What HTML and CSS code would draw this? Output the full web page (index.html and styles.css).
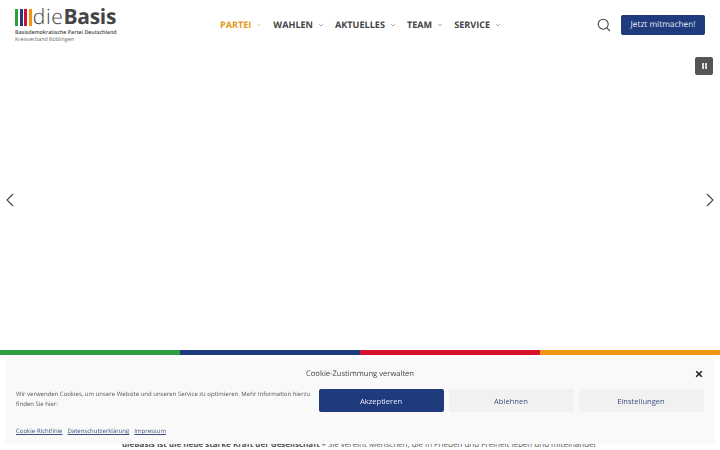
FILE: index.html
```html
<!DOCTYPE html>
<html lang="de">
<head>
  <meta charset="utf-8">
  <title>dieBasis Kreisverband Böblingen</title>
  <link rel="stylesheet" href="styles.css">
</head>
<body>
  <header class="site-header">
    <a class="logo" href="#">
      <span class="logo-top">
        <span class="logo-bars">
          <i class="bar bar-green"></i>
          <i class="bar bar-blue"></i>
          <i class="bar bar-red"></i>
          <i class="bar bar-orange"></i>
        </span>
        <span class="logo-name"><span class="logo-die">die</span><b>Basis</b></span>
      </span>
      <span class="logo-claim">Basisdemokratische Partei Deutschland</span>
      <span class="logo-sub">Kreisverband Böblingen</span>
    </a>
    <nav class="main-nav">
      <a class="nav-item active" href="#">PARTEI<svg class="caret" viewBox="0 0 8 6"><path d="M1.5 1.5 4 4l2.5-2.5"/></svg></a>
      <a class="nav-item" href="#">WAHLEN<svg class="caret" viewBox="0 0 8 6"><path d="M1.5 1.5 4 4l2.5-2.5"/></svg></a>
      <a class="nav-item" href="#">AKTUELLES<svg class="caret" viewBox="0 0 8 6"><path d="M1.5 1.5 4 4l2.5-2.5"/></svg></a>
      <a class="nav-item" href="#">TEAM<svg class="caret" viewBox="0 0 8 6"><path d="M1.5 1.5 4 4l2.5-2.5"/></svg></a>
      <a class="nav-item" href="#">SERVICE<svg class="caret" viewBox="0 0 8 6"><path d="M1.5 1.5 4 4l2.5-2.5"/></svg></a>
    </nav>
    <div class="header-tools">
      <svg class="search-icon" viewBox="0 0 14 14"><circle cx="6.2" cy="6.2" r="5"/><path d="M9.8 9.8 13 13"/></svg>
      <a class="cta" href="#">Jetzt mitmachen!</a>
    </div>
  </header>

  <section class="hero">
    <button class="pause"><i></i><i></i></button>
    <svg class="arrow arrow-prev" viewBox="0 0 10 14"><path d="M8 1 2 7l6 6"/></svg>
    <svg class="arrow arrow-next" viewBox="0 0 10 14"><path d="M2 1l6 6-6 6"/></svg>
  </section>

  <div class="stripe">
    <i class="bar-green"></i>
    <i class="bar-blue"></i>
    <i class="bar-red"></i>
    <i class="bar-orange"></i>
  </div>

  <section class="intro">
    <p><b>dieBasis ist die neue starke Kraft der Gesellschaft –</b> Sie vereint Menschen, die in Frieden und Freiheit leben und miteinander</p>
  </section>

  <div class="cookie-box">
    <div class="cookie-head">
      <span>Cookie-Zustimmung verwalten</span>
      <svg class="cookie-close" viewBox="0 0 10 10"><path d="M1.5 1.5l7 7M8.5 1.5l-7 7"/></svg>
    </div>
    <div class="cookie-main">
      <p>Wir verwenden Cookies, um unsere Website und unseren Service zu optimieren. Mehr Information hierzu finden Sie hier:</p>
      <div class="cookie-buttons">
        <button class="btn btn-primary">Akzeptieren</button>
        <button class="btn">Ablehnen</button>
        <button class="btn">Einstellungen</button>
      </div>
    </div>
    <div class="cookie-links">
      <a href="#">Cookie-Richtlinie</a>
      <a href="#">Datenschutzerklärung</a>
      <a href="#">Impressum</a>
    </div>
  </div>
</body>
</html>
```

FILE: styles.css
```css
* {
  box-sizing: border-box;
}
html, body {
  height: 450px;
  overflow: hidden;
}
body {
  margin: 0;
  background: #fff;
  color: #444;
  font-family: "Open Sans", sans-serif;
  text-rendering: geometricPrecision;
}
a {
  color: inherit;
  text-decoration: none;
}

.bar-green { background: #2f9e3f; }
.bar-blue { background: #1f3a7d; }
.bar-red { background: #d5132b; }
.bar-orange { background: #f0950f; }

.site-header {
  display: flex;
  align-items: flex-start;
  height: 50px;
  padding: 6px 15px 0;
}

.logo {
  display: flex;
  flex-direction: column;
  width: 190px;
  flex: none;
}
.logo-top {
  display: flex;
  align-items: center;
  gap: 1px;
  height: 22px;
}
.logo-bars {
  display: flex;
  gap: 1.6px;
  margin-top: 1px;
}
.bar {
  width: 3px;
  height: 17px;
}
.logo-name {
  font-size: 21px;
  line-height: 22px;
  color: #444;
}
.logo-die {
  font-weight: 300;
  letter-spacing: 0.6px;
}
.logo-name b {
  letter-spacing: -0.25px;
}
.logo-claim {
  font-size: 5.3px;
  line-height: 8px;
  font-weight: 600;
  color: #444;
}
.logo-sub {
  font-size: 5.3px;
  line-height: 7px;
  color: #666;
}

.main-nav {
  display: flex;
  gap: 11px;
  margin-top: 12px;
  margin-left: 15px;
}
.nav-item {
  display: flex;
  align-items: center;
  gap: 5px;
  font-size: 9.1px;
  line-height: 14px;
  font-weight: 700;
  color: #444;
}
.nav-item.active {
  color: #e29a1c;
}
.caret {
  width: 6px;
  height: 4.5px;
  fill: none;
  stroke: #888;
  stroke-width: 1;
}
.nav-item.active .caret {
  stroke: #eec07a;
}

.header-tools {
  display: flex;
  align-items: center;
  gap: 10px;
  margin-left: auto;
  margin-top: 9px;
}
.search-icon {
  width: 14px;
  height: 14px;
  fill: none;
  stroke: #444;
  stroke-width: 1.1;
}
.cta {
  width: 84px;
  height: 20px;
  border-radius: 2px;
  background: #1f3a7d;
  color: #e8ecf5;
  font-size: 8.3px;
  line-height: 20px;
  text-align: center;
}

.hero {
  position: relative;
  height: 300px;
}
.pause {
  position: absolute;
  top: 7px;
  right: 7px;
  display: flex;
  align-items: center;
  justify-content: center;
  gap: 1px;
  width: 18px;
  height: 18px;
  padding: 0;
  border: 0;
  border-radius: 2px;
  background: #555;
}
.pause i {
  width: 2px;
  height: 6px;
  background: #ddd;
}
.arrow {
  position: absolute;
  top: 143px;
  width: 10px;
  height: 14px;
  fill: none;
  stroke: #444;
  stroke-width: 1.1;
}
.arrow-prev { left: 5px; }
.arrow-next { right: 5px; }

.stripe {
  display: grid;
  grid-template-columns: repeat(4, 1fr);
  height: 5px;
}

.intro {
  padding: 83px 122px 0;
}
.intro p {
  margin: 0;
  font-size: 8px;
  line-height: 13px;
  white-space: nowrap;
  color: #555;
}

/* banner floats over the page */
.cookie-box {
  position: fixed;
  left: 6px;
  right: 6px;
  bottom: 6px;
  height: 85px;
  padding: 10px 10px 0;
  border-radius: 4px;
  background: #f9f9f9;
  box-shadow: 0 0 3px rgba(0, 0, 0, 0.04);
}
.cookie-head {
  position: relative;
  text-align: center;
  font-size: 7.6px;
  line-height: 11px;
  color: #444;
}
.cookie-close {
  position: absolute;
  top: 0.5px;
  right: 1.5px;
  width: 8px;
  height: 8px;
  fill: none;
  stroke: #222;
  stroke-width: 2;
}
.cookie-main {
  display: flex;
  align-items: flex-start;
  margin-top: 9px;
}
.cookie-main p {
  width: 296px;
  margin: 0 6.5px 0 0;
  flex: none;
  font-size: 6px;
  line-height: 10px;
  color: #555;
}
.cookie-buttons {
  display: flex;
  gap: 5px;
}
.btn {
  width: 125px;
  height: 23px;
  padding: 0;
  border: 0;
  border-radius: 2px;
  background: #f1f1f1;
  color: #3d4f80;
  font-family: inherit;
  font-size: 7.6px;
}
.btn-primary {
  background: #1f3a7d;
  color: #e8ecf5;
}
.cookie-links {
  display: flex;
  gap: 5px;
  margin-top: 14px;
  font-size: 6px;
  line-height: 10px;
}
.cookie-links a {
  color: #3d4f80;
  text-decoration: underline;
}
```
